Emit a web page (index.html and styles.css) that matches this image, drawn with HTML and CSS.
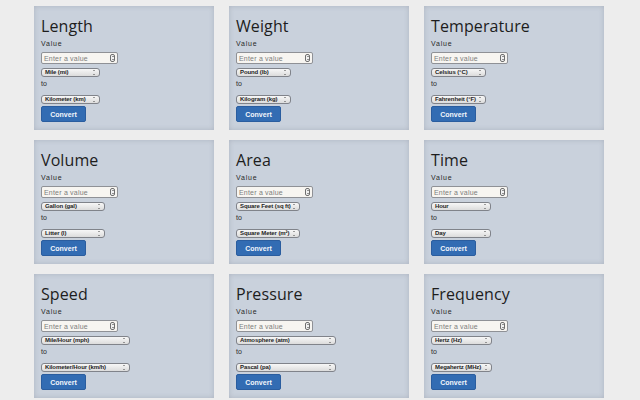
FILE: index.html
```html
<!DOCTYPE html>
<html>
<head>
<meta charset="utf-8">
<link rel="stylesheet" href="styles.css">
</head>
<body>
<main class="grid">
  <section class="card">
    <h2 class="title">Length</h2>
    <div class="label">Value</div>
    <div class="num"><span class="ph">Enter a value</span><span class="spin"></span></div>
    <div class="sel w59">Mile (mi)</div>
    <div class="to">to</div>
    <div class="sel sel2 w59">Kilometer (km)</div>
    <button class="btn">Convert</button>
  </section>
  <section class="card">
    <h2 class="title">Weight</h2>
    <div class="label">Value</div>
    <div class="num"><span class="ph">Enter a value</span><span class="spin"></span></div>
    <div class="sel w55">Pound (lb)</div>
    <div class="to">to</div>
    <div class="sel sel2 w55">Kilogram (kg)</div>
    <button class="btn">Convert</button>
  </section>
  <section class="card">
    <h2 class="title">Temperature</h2>
    <div class="label">Value</div>
    <div class="num"><span class="ph">Enter a value</span><span class="spin"></span></div>
    <div class="sel w55">Celsius (°C)</div>
    <div class="to">to</div>
    <div class="sel sel2 w55">Fahrenheit (°F)</div>
    <button class="btn">Convert</button>
  </section>
  <section class="card">
    <h2 class="title">Volume</h2>
    <div class="label">Value</div>
    <div class="num"><span class="ph">Enter a value</span><span class="spin"></span></div>
    <div class="sel w64">Gallon (gal)</div>
    <div class="to">to</div>
    <div class="sel sel2 w64">Litter (l)</div>
    <button class="btn">Convert</button>
  </section>
  <section class="card">
    <h2 class="title">Area</h2>
    <div class="label">Value</div>
    <div class="num"><span class="ph">Enter a value</span><span class="spin"></span></div>
    <div class="sel w64">Square Feet (sq ft)</div>
    <div class="to">to</div>
    <div class="sel sel2 w64">Square Meter (m²)</div>
    <button class="btn">Convert</button>
  </section>
  <section class="card">
    <h2 class="title">Time</h2>
    <div class="label">Value</div>
    <div class="num"><span class="ph">Enter a value</span><span class="spin"></span></div>
    <div class="sel w60">Hour</div>
    <div class="to">to</div>
    <div class="sel sel2 w60">Day</div>
    <button class="btn">Convert</button>
  </section>
  <section class="card">
    <h2 class="title">Speed</h2>
    <div class="label">Value</div>
    <div class="num"><span class="ph">Enter a value</span><span class="spin"></span></div>
    <div class="sel w89">Mile/Hour (mph)</div>
    <div class="to">to</div>
    <div class="sel sel2 w89">Kilometer/Hour (km/h)</div>
    <button class="btn">Convert</button>
  </section>
  <section class="card">
    <h2 class="title">Pressure</h2>
    <div class="label">Value</div>
    <div class="num"><span class="ph">Enter a value</span><span class="spin"></span></div>
    <div class="sel w100">Atmosphere (atm)</div>
    <div class="to">to</div>
    <div class="sel sel2 w100">Pascal (pa)</div>
    <button class="btn">Convert</button>
  </section>
  <section class="card">
    <h2 class="title">Frequency</h2>
    <div class="label">Value</div>
    <div class="num"><span class="ph">Enter a value</span><span class="spin"></span></div>
    <div class="sel w61">Hertz (Hz)</div>
    <div class="to">to</div>
    <div class="sel sel2 w61">Megahertz (MHz)</div>
    <button class="btn">Convert</button>
  </section>
</main>
</body>
</html>
```
FILE: styles.css
```css
* { box-sizing: border-box; }
html, body { margin: 0; padding: 0; }
body {
  background: #ededed;
  width: 640px;
  height: 400px;
  overflow: hidden;
  font-family: "Liberation Sans", Arial, sans-serif;
}
.grid {
  display: grid;
  grid-template-columns: repeat(3, 180px);
  grid-auto-rows: 124px;
  column-gap: 15px;
  row-gap: 10px;
  padding: 6px 0 0 34px;
}
.card {
  background: #c9d1dc;
  box-shadow: inset 0 0 5px rgba(90, 100, 115, 0.25);
  padding: 10px 7px 0;
  display: flex;
  flex-direction: column;
  align-items: flex-start;
}
.title {
  margin: 0;
  font-family: "Open Sans", sans-serif;
  font-weight: 400;
  font-size: 16px;
  line-height: 20px;
  height: 20px;
  color: #1d1d1d;
  letter-spacing: 0.1px;
}
.label {
  margin-top: 4px;
  font-size: 7px;
  line-height: 8px;
  letter-spacing: 0.8px;
  color: #2a2a2a;
}
.num {
  margin-top: 4px;
  width: 77px;
  height: 12px;
  background: #f7f5f1;
  border: 1px solid #8f9196;
  border-radius: 2px;
  display: flex;
  align-items: center;
  justify-content: space-between;
  padding: 0 2px 0 2px;
}
.ph {
  font-size: 7px;
  color: #7d7d7d;
  letter-spacing: 0.2px;
}
.spin {
  width: 5px;
  height: 8px;
  border: 1px solid #6f6f6f;
  border-radius: 2px;
  background: #f2f2f2;
  position: relative;
}
.spin::before, .spin::after {
  content: "";
  position: absolute;
  left: 0.5px;
  border-left: 1px solid transparent;
  border-right: 1px solid transparent;
}
.spin::before { top: 1px; border-bottom: 1.5px solid #333; }
.spin::after { bottom: 1px; border-top: 1.5px solid #333; }
.sel {
  margin-top: 4px;
  height: 9px;
  background: linear-gradient(#f7f7f7, #dcdcdc);
  border: 1px solid #80838a;
  border-radius: 3px;
  font-size: 6px;
  font-weight: 700;
  line-height: 7px;
  letter-spacing: -0.1px;
  color: #1e1e1e;
  padding-left: 3px;
  position: relative;
  white-space: nowrap;
  overflow: hidden;
}
.sel::before, .sel::after {
  content: "";
  position: absolute;
  right: 4px;
  border-left: 1.2px solid transparent;
  border-right: 1.2px solid transparent;
}
.sel::before { top: 1px; border-bottom: 1.5px solid #444; }
.sel::after { bottom: 1px; border-top: 1.5px solid #444; }
.sel2 { margin-top: 7px; }
.to {
  margin-top: 3px;
  font-size: 7px;
  line-height: 8px;
  color: #2a2a2a;
}
.btn {
  margin-top: 2px;
  width: 45px;
  height: 16px;
  border: 1px solid #2a5d9f;
  border-radius: 2px;
  background: #326cb3;
  color: #f2f6fb;
  font-family: "Liberation Sans", Arial, sans-serif;
  font-weight: 700;
  font-size: 7px;
  padding: 0;
}
.w55 { width: 55px; }
.w59 { width: 59px; }
.w60 { width: 60px; }
.w61 { width: 61px; }
.w64 { width: 64px; }
.w89 { width: 89px; }
.w100 { width: 100px; }
```
